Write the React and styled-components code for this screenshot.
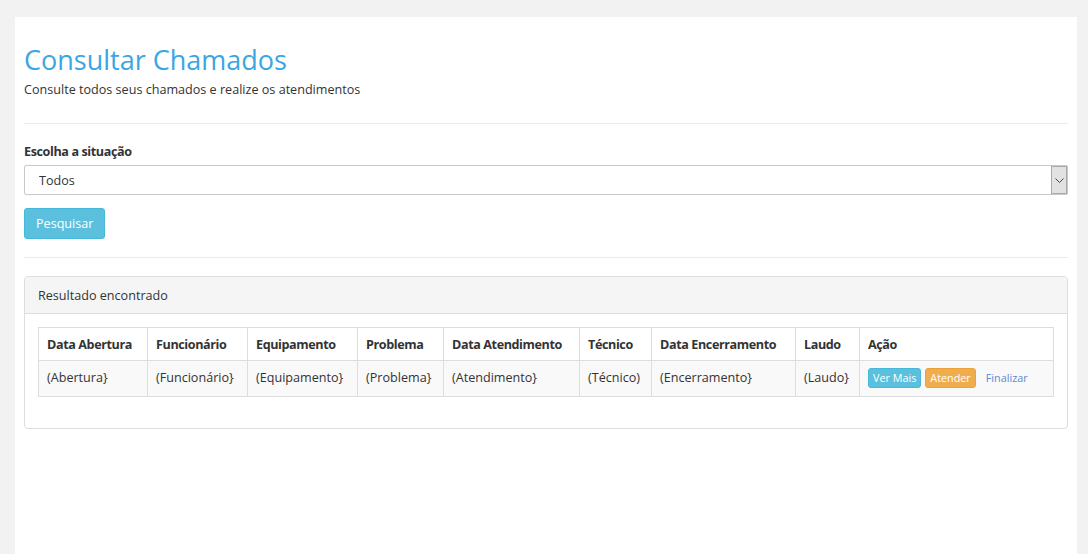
import React from 'react'
import styled, {createGlobalStyle} from 'styled-components'

const Global = createGlobalStyle`
    html, body {margin:0; padding:0; background:#f2f2f2;}
    body {font-family: "Open Sans", "Liberation Sans", sans-serif; font-size:12.6px; color:#333;}
    * {box-sizing:border-box;}
`

const Page = styled.div`
    margin: 17px 11px 0 15px;
    min-height: 537px;
    background: #fff;
    padding: 24px 9px 20px 9px;
`

const Title = styled.h1`
    margin: 0;
    font-size: 27px;
    font-weight: 400;
    color: #3aa6e4;
    line-height: 38px;
`

const Subtitle = styled.p`
    margin: 2px 0 0 0;
    font-size: 12.6px;
    line-height: 18px;
`

const Rule = styled.hr`
    border: 0;
    border-top: 1px solid #eaeaea;
    margin: ${p => p.m || '24px 0 18px 0'};
`

const Label = styled.label`
    display: block;
    font-weight: 700;
    font-size: 12.6px;
    letter-spacing: -0.4px;
    line-height: 18px;
    margin-bottom: 4px;
`

const SelectWrap = styled.div`
    position: relative;
    height: 30px;
`

const Select = styled.select`
    width: 100%;
    height: 30px;
    appearance: none;
    border: 1px solid #c9c9c9;
    border-radius: 2px;
    background: #fff;
    padding: 0 14px;
    font-family: inherit;
    font-size: 12.6px;
    color: #333;
`

const Arrow = styled.span`
    position: absolute;
    right: 1px;
    top: 1px;
    width: 16px;
    height: 28px;
    background: #e2e2e2;
    border: 1px solid #a9a9a9;
    display: flex;
    align-items: center;
    justify-content: center;
    pointer-events: none;
`

const Btn = styled.button`
    font-family: inherit;
    color: #fff;
    border: 1px solid ${p => p.border || '#46b8da'};
    background: ${p => p.bg || '#5bc0de'};
    border-radius: 3px;
    cursor: pointer;
`

const SearchBtn = styled(Btn)`
    margin-top: 13px;
    height: 31px;
    padding: 0 11px;
    font-size: 12.6px;
`

const SmallBtn = styled(Btn)`
    height: 20px;
    padding: 0 4px;
    font-size: 10.8px;
    line-height: 18px;
    margin-right: 4px;
`

const Panel = styled.div`
    border: 1px solid #ddd;
    border-radius: 4px;
`

const PanelHead = styled.div`
    background: #f5f5f5;
    border-bottom: 1px solid #ddd;
    height: 37px;
    padding: 0 13px;
    display: flex;
    align-items: center;
    font-size: 12.6px;
    border-radius: 4px 4px 0 0;
`

const PanelBody = styled.div`
    padding: 13px 14px 31px 13px;
`

const Table = styled.table`
    width: 100%;
    border-collapse: collapse;
    table-layout: fixed;
`

const Th = styled.th`
    width: ${p => p.w}px;
    border: 1px solid #ddd;
    text-align: left;
    font-weight: 700;
    font-size: 12.6px;
    letter-spacing: -0.4px;
    height: 33px;
    padding: 0 8px;
    white-space: nowrap;
`

const Td = styled.td`
    border: 1px solid #ddd;
    background: #f9f9f9;
    height: 36px;
    padding: 0 8px 2px 8px;
    font-size: 12.6px;
    white-space: nowrap;
`

const Link = styled.a`
    color: #5b8ad0;
    font-size: 10.8px;
    margin-left: 6px;
    text-decoration: none;
`

const cols = [
    ['Data Abertura', 109, '(Abertura}'],
    ['Funcionário', 100, '(Funcionário}'],
    ['Equipamento', 110, '(Equipamento}'],
    ['Problema', 86, '(Problema}'],
    ['Data Atendimento', 136, '(Atendimento}'],
    ['Técnico', 72, '(Técnico)'],
    ['Data Encerramento', 144, '(Encerramento}'],
    ['Laudo', 64, '(Laudo}'],
]

export default function App() {
    return (
        <>
            <Global/>
            <Page>
                <Title>Consultar Chamados</Title>
                <Subtitle>Consulte todos seus chamados e realize os atendimentos</Subtitle>
                <Rule m="24px 0 19px 0"/>
                <Label>Escolha a situação</Label>
                <SelectWrap>
                    <Select defaultValue="todos">
                        <option value="todos">Todos</option>
                    </Select>
                    <Arrow>
                        <svg width="9" height="5" viewBox="0 0 9 5">
                            <path d="M0.5 0.5 L4.5 4.5 L8.5 0.5" fill="none" stroke="#444" strokeWidth="1"/>
                        </svg>
                    </Arrow>
                </SelectWrap>
                <SearchBtn>Pesquisar</SearchBtn>
                <Rule m="18px 0 18px 0"/>
                <Panel>
                    <PanelHead>Resultado encontrado</PanelHead>
                    <PanelBody>
                        <Table>
                            <thead>
                                <tr>
                                    {cols.map(c => <Th key={c[0]} w={c[1]}>{c[0]}</Th>)}
                                    <Th w={194}>Ação</Th>
                                </tr>
                            </thead>
                            <tbody>
                                <tr>
                                    {cols.map(c => <Td key={c[0]}>{c[2]}</Td>)}
                                    <Td>
                                        <SmallBtn>Ver Mais</SmallBtn>
                                        <SmallBtn bg="#f0ad4e" border="#eea236">Atender</SmallBtn>
                                        <Link href="#">Finalizar</Link>
                                    </Td>
                                </tr>
                            </tbody>
                        </Table>
                    </PanelBody>
                </Panel>
            </Page>
        </>
    )
}
